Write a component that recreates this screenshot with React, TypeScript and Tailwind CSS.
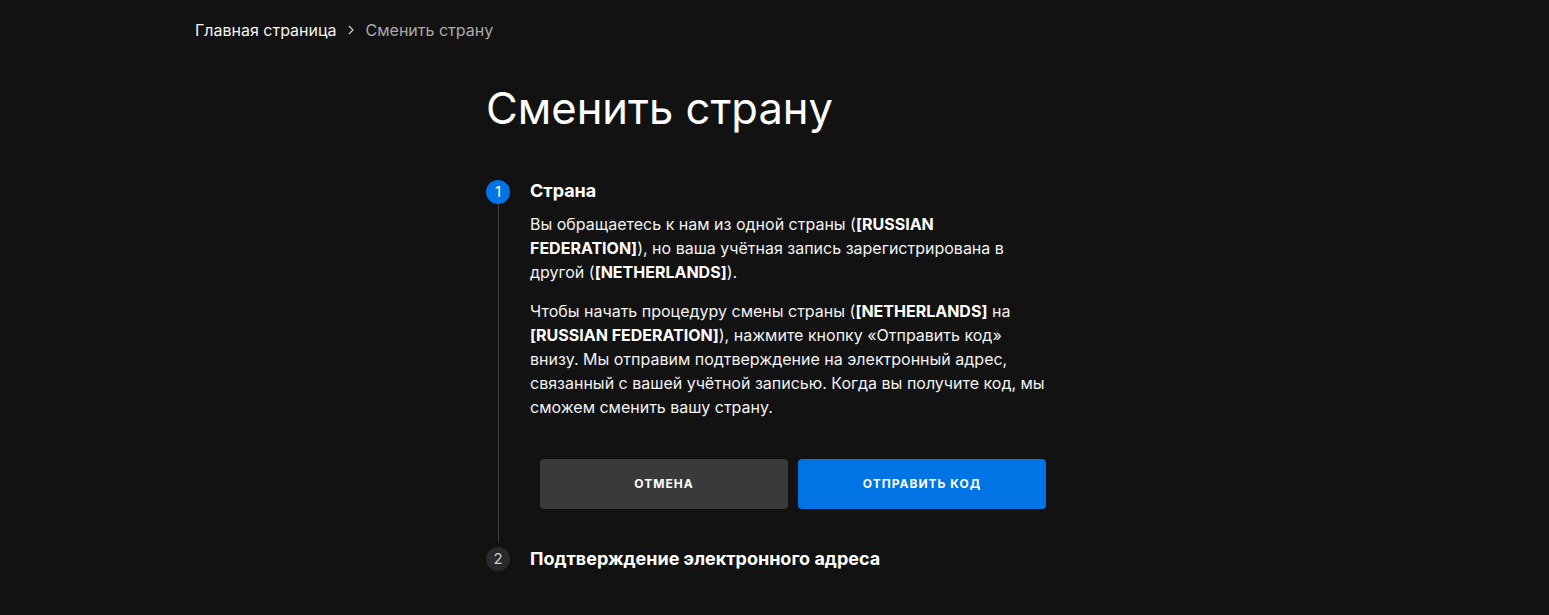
import React from "react";

export default function App() {
  return (
    <div
      className="min-h-[615px] w-full bg-[#121212] text-[#f5f5f5]"
      style={{ fontFamily: "Inter, 'Noto Sans', sans-serif" }}
    >
      <div className="pl-[195px] pt-[18px] flex items-center text-[16px] leading-6">
        <span className="text-[#f5f5f5]">Главная страница</span>
        <svg className="ml-[9px] mr-[10px]" width="10" height="12" viewBox="0 0 10 12" fill="none">
          <path d="M3 2 L7 6 L3 10" stroke="#d0d0d0" strokeWidth="1.2" />
        </svg>
        <span className="text-[#aaaaaa]">Сменить страну</span>
      </div>

      <div className="ml-[486px] w-[560px] pt-[40px]">
        <h1 className="text-[43.5px] leading-[52px] font-normal text-white">
          Сменить страну
        </h1>

        <div className="mt-[46px] flex">
          <div className="flex w-6 flex-col items-center">
            <div className="flex h-6 w-6 items-center justify-center rounded-full bg-[#0074e4] text-[15px] text-white">
              1
            </div>
            <div className="w-px flex-1 bg-[#3f3f3f]" />
            <div className="h-[5px]" />
          </div>
          <div className="ml-5 flex-1 pb-[38px]">
            <div className="text-[18px] font-bold leading-[22px] text-white">Страна</div>
            <p className="mt-[10px] text-[16px] leading-6 text-[#f2f2f2]">
              Вы обращаетесь к нам из одной страны (<b className="font-bold text-white">[RUSSIAN FEDERATION]</b>), но ваша учётная запись зарегистрирована в другой (<b className="font-bold text-white">[NETHERLANDS]</b>).
            </p>
            <p className="mt-[15px] text-[16px] leading-6 text-[#f2f2f2]">
              Чтобы начать процедуру смены страны (<b className="font-bold text-white">[NETHERLANDS]</b> на <b className="font-bold text-white">[RUSSIAN FEDERATION]</b>), нажмите кнопку «Отправить код» внизу. Мы отправим подтверждение на электронный адрес, связанный с вашей учётной записью. Когда вы получите код, мы сможем сменить вашу страну.
            </p>
            <div className="ml-[10px] mt-[40px] flex gap-[10px]">
              <button className="h-[50px] flex-1 rounded-[4px] bg-[#3a3a3a] text-[12px] font-bold uppercase tracking-[1px] text-white">
                Отмена
              </button>
              <button className="h-[50px] flex-1 rounded-[4px] bg-[#0074e4] text-[12px] font-bold uppercase tracking-[1px] text-white">
                Отправить код
              </button>
            </div>
          </div>
        </div>

        <div className="flex items-center">
          <div className="flex h-6 w-6 items-center justify-center rounded-full bg-[#2a2a2a] text-[15px] text-[#cccccc]">
            2
          </div>
          <div className="ml-5 text-[18px] font-bold leading-[22px] text-white">
            Подтверждение электронного адреса
          </div>
        </div>
      </div>
    </div>
  );
}
